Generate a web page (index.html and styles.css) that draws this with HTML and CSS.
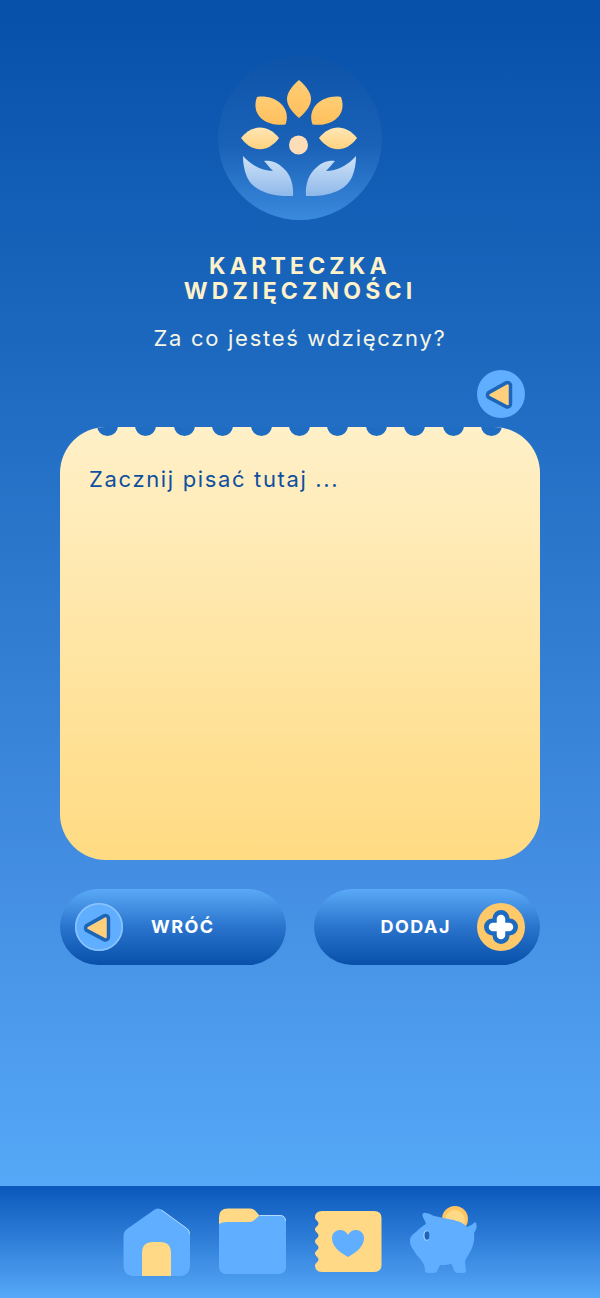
FILE: index.html
```html
<!DOCTYPE html>
<html>
<head>
	<meta charset="utf-8">
	<title>Karteczka wdzięczności</title>
	<link rel="stylesheet" href="styles.css">
</head>
<body>

<main class="cnt">
	<svg class="logo" viewBox="218 56 164 164">
		<defs>
			<linearGradient id="logoBg" x1="0" y1="0" x2="0" y2="1">
				<stop offset="0" stop-color="#0d54a9"/>
				<stop offset="0.55" stop-color="#1a62b8"/>
				<stop offset="1" stop-color="#3a8ade"/>
			</linearGradient>
			<linearGradient id="petalTop" x1="0" y1="0" x2="0" y2="1">
				<stop offset="0" stop-color="#ffcd75"/>
				<stop offset="1" stop-color="#ffbf5c"/>
			</linearGradient>
			<linearGradient id="petalSide" x1="0" y1="0" x2="0" y2="1">
				<stop offset="0" stop-color="#ffe7b5"/>
				<stop offset="1" stop-color="#ffd27f"/>
			</linearGradient>
			<linearGradient id="hand" x1="0" y1="0" x2="0" y2="1">
				<stop offset="0" stop-color="#cfe2f7"/>
				<stop offset="1" stop-color="#8fb9ea"/>
			</linearGradient>
		</defs>
		<circle cx="300" cy="138" r="82" fill="url(#logoBg)"/>
		<path fill="url(#petalTop)" d="M299 80 C283 94 283 104 299 118 C315 104 315 94 299 80Z"/>
		<path fill="url(#petalTop)" d="M257 97 C274 94 292 107 285.500 124.500 C268 127 250 116.500 257 97Z"/>
		<path fill="url(#petalTop)" d="M341 97 C324 94 306 107 312.500 124.500 C330 127 348 116.500 341 97Z"/>
		<path fill="url(#petalSide)" d="M241 138 C252 124 268 124 279 138 C268 153 252 153 241 138Z"/>
		<path fill="url(#petalSide)" d="M357 138 C346 124 330 124 319 138 C330 153 346 153 357 138Z"/>
		<circle cx="298.500" cy="145" r="9.500" fill="#fddcb8"/>
		<path fill="url(#hand)" d="M243 156 C251 165 262 171 273 171 C269 167 267 164 264 161 C271 160 278 163 282 167 C290 173 294 184 293 196 C272 197 253 191 247 177 C244 170 243 163 243 156Z"/>
		<path fill="url(#hand)" transform="matrix(-1 0 0 1 599 0)" d="M243 156 C251 165 262 171 273 171 C269 167 267 164 264 161 C271 160 278 163 282 167 C290 173 294 184 293 196 C272 197 253 191 247 177 C244 170 243 163 243 156Z"/>
	</svg>

	<h1 class="title">KARTECZKA<br>WDZIĘCZNOŚCI</h1>
	<p class="subtitle">Za co jesteś wdzięczny?</p>

	<button class="round round-top">
		<svg viewBox="0 0 48 48"><path class="tri-edge" d="M13.500 25 L30.500 15.500 V34Z"/><path class="tri-fill" d="M13.500 25 L30.500 15.500 V34Z"/></svg>
	</button>

	<div class="note">
		<div class="holes">
			<span></span><span></span><span></span><span></span><span></span><span></span><span></span><span></span><span></span><span></span><span></span>
		</div>
		<p class="note-text">Zacznij pisać tutaj ...</p>
	</div>

	<div class="actions">
		<button class="btn">
			<span class="round round-back">
				<svg viewBox="0 0 48 48"><path class="tri-edge" d="M13.500 25 L30.500 15.500 V34Z"/><path class="tri-fill" d="M13.500 25 L30.500 15.500 V34Z"/></svg>
			</span>
			<span class="btn-label">WRÓĆ</span>
		</button>
		<button class="btn btn-add">
			<span class="btn-label">DODAJ</span>
			<span class="round round-plus">
				<svg viewBox="0 0 48 48"><path class="plus-edge" d="M24 15.500 V32.500 M15.500 24 H32.500"/><path class="plus-fill" d="M24 16 V32 M16 24 H32"/></svg>
			</span>
		</button>
	</div>
</main>

<nav class="tabs">
	<!-- home -->
	<svg class="tab" viewBox="0 0 68 70">
		<path class="ic-blue" d="M32 3 Q36 0 40 3 L65.500 22 Q68 24 68 27 V58 Q68 69 57 69 H12 Q1.500 69 1.500 58 V29 Q1.500 24.500 5 22Z"/>
		<path class="ic-shine" d="M39.500 3 L65.500 22 Q67.500 24 67.500 27"/>
		<path class="ic-yellow" d="M20 69 V46 Q20 35 31 35 H38 Q49 35 49 46 V69Z"/>
	</svg>
	<!-- folder -->
	<svg class="tab" viewBox="0 0 68 70">
		<rect class="ic-blue" x="1" y="8" width="67" height="59" rx="7"/>
		<path class="ic-shine" d="M42 8.500 H62 Q67.500 8.500 67.500 14"/>
		<path class="ic-yellow" d="M1 17 V10 Q1 1.500 10 1.500 H32 Q35 1.500 37 3.500 L41.500 8.500 L37 12.500 Q35 15 31 15 H9 Q4 15 1 17Z"/>
	</svg>
	<!-- notebook with heart -->
	<svg class="tab" viewBox="0 0 68 70">
		<path class="ic-yellow" d="M8 4 H60 Q67.500 4 67.500 11 V58 Q67.500 65 60 65 H8 Q1 65 1 58.500 C1 56 4.500 55 4.500 52.500 C4.500 50 1 49 1 46.500 C1 44 4.500 43 4.500 40.500 C4.500 38 1 37 1 34.500 C1 32 4.500 31 4.500 28.500 C4.500 26 1 25 1 22.500 C1 20 4.500 19 4.500 16.500 C4.500 14 1 13 1 10.500 Q1 4 8 4Z"/>
		<path class="ic-blue" d="M34 50 C25 45 18 39 18 31 C18 26 22 23 26 23 C30 23 32.500 25 34 28 C35.500 25 38 23 42 23 C46 23 50 26 50 31 C50 39 43 45 34 50Z"/>
	</svg>
	<!-- piggy bank with coin -->
	<svg class="tab" viewBox="0 0 68 70">
		<circle cx="45" cy="12" r="13" fill="#ffc561"/>
		<circle cx="45" cy="13" r="10" fill="#ffd986"/>
		<path class="ic-blue" d="M0 33 C0 30 3 27 6 25 C9 22 12 19 16 17 C15 13 12 10 12.500 7.500 Q13 5 16 6 C19 6.500 22 8 24 9 C32 11 42 12 50 15 C53 16 55 18 57 20 C60 19 63 17 65 15 C67.500 17 67 22 64 26 C65 33 63 40 60 45 C58 49 56 51 55 54 C55 58 56 61 56 64 Q56 66 53 66 H48 Q45 66 44 63 L41.500 57 C37 58 34 58 30 58 L27.500 63 Q26.500 66 24 66 H18 Q15 66 15 63 C15 60 14 58 13 56 C11 53 9 50 6.500 48 C5 46 4 43 2 41 C0 38 0 35 0 33Z"/>
		<ellipse cx="16.500" cy="28.500" rx="3.200" ry="5.200" fill="#a9d3fb"/>
		<ellipse cx="17" cy="28.500" rx="2.500" ry="4.200" fill="#1c65b8"/>
	</svg>
</nav>

</body>
</html>
```

FILE: styles.css
```css
* {
	box-sizing: border-box;
}

html, body {
	margin: 0;
	height: 1298px;
}

body {
	display: flex;
	flex-direction: column;
	overflow: hidden;
	font-family: Inter, "Liberation Sans", sans-serif;
	background: linear-gradient(180deg, #0750aa 0, #206cc2 400px, #4590e4 900px, #55a8f7 1186px);
}

button {
	font-family: inherit;
	border: 0;
	padding: 0;
}

svg {
	display: block;
}

.cnt {
	flex: 1;
	display: flex;
	flex-direction: column;
	padding: 56px 60px 0;
}

.logo {
	width: 164px;
	height: 164px;
	align-self: center;
}

.title {
	margin: 34px 0 0;
	font-size: 23px;
	line-height: 25px;
	font-weight: 700;
	letter-spacing: 4.200px;
	text-align: center;
	color: #fff2c8;
}

.subtitle {
	margin: 19px 0 0;
	font-size: 22px;
	line-height: 30px;
	letter-spacing: 1.700px;
	text-align: center;
	color: #f5f5e6;
}

.round {
	display: block;
	width: 48px;
	height: 48px;
	border-radius: 50%;
	background-color: #60aeff;
}

.round-top {
	align-self: flex-end;
	margin: 17px 15px 0 0;
}

.round-back {
	margin-left: 15px;
	box-shadow: inset 0 0 0 1.500px #8cc4fc;
}

.round-plus {
	background-color: #ffc868;
	margin-right: 15px;
}

.tri-edge {
	fill: #1c65b8;
	stroke: #1c65b8;
	stroke-width: 9.500;
	stroke-linejoin: round;
}

.tri-fill {
	fill: #ffcf7c;
	stroke: #ffcf7c;
	stroke-width: 2.500;
	stroke-linejoin: round;
}

.plus-edge {
	fill: none;
	stroke: #1c6bc0;
	stroke-width: 17;
	stroke-linecap: round;
}

.plus-fill {
	fill: none;
	stroke: #fff;
	stroke-width: 8.500;
	stroke-linecap: round;
}

.note {
	position: relative;
	height: 433px;
	margin-top: 9px;
	padding: 38px 29px;
	border-radius: 46px;
	overflow: hidden;
	background: linear-gradient(180deg, #fff0c8 0, #ffdb82 100%);
}

.holes {
	position: absolute;
	top: -12px;
	left: 37px;
	display: flex;
	gap: 17.400px;
}

.holes span {
	width: 21px;
	height: 21px;
	border-radius: 50%;
	background-color: #1f6dc3;
}

.note-text {
	margin: 0;
	font-size: 22px;
	line-height: 28px;
	letter-spacing: 1.650px;
	color: #0f4f9f;
}

.actions {
	display: flex;
	justify-content: space-between;
	margin-top: 29px;
}

.btn {
	display: flex;
	align-items: center;
	width: 226px;
	height: 76px;
	border-radius: 38px;
	background: linear-gradient(180deg, #5aa9f7 0, #2a74cd 50%, #0850a9 100%);
}

.btn-add {
	justify-content: flex-end;
}

.btn-label {
	margin-bottom: 2px;
	font-size: 18px;
	font-weight: 700;
	letter-spacing: 1.500px;
	color: #fff;
}

.round-back + .btn-label {
	margin-left: 28px;
}

.btn-add .btn-label {
	margin-right: 26px;
}

.tabs {
	display: flex;
	justify-content: center;
	gap: 28px;
	height: 112px;
	padding-top: 21px;
	background: linear-gradient(180deg, #0a58bb 0, #56a8f8 100%);
}

.tab {
	width: 68px;
	height: 70px;
	overflow: visible;
}

.ic-blue {
	fill: #60aeff;
}

.ic-yellow {
	fill: #ffd986;
}

.ic-shine {
	fill: none;
	stroke: #b5daff;
	stroke-width: 1;
}
```
